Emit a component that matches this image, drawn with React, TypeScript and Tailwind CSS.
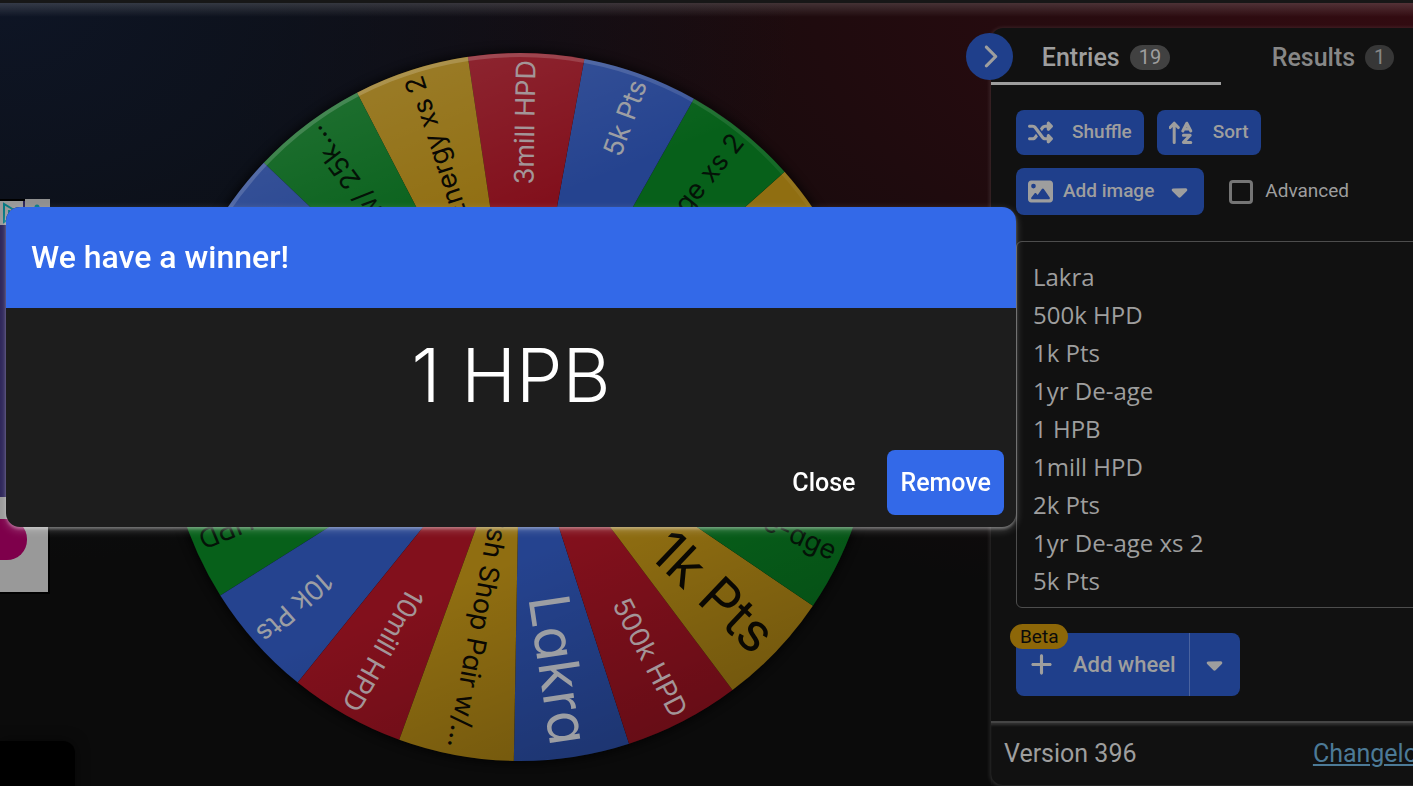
import { FaCaretDown, FaChevronRight, FaImage, FaPlus, FaShuffle } from 'react-icons/fa6'

interface Slice {
  label: string
  size?: number
}

const slices: Slice[] = [
  { label: 'Lakra', size: 56 },
  { label: '500k HPD' },
  { label: '1k Pts', size: 54 },
  { label: '1yr De-age' },
  { label: '1 HPB', size: 54 },
  { label: '1mill HPD' },
  { label: '2k Pts' },
  { label: '1yr De-age xs 2' },
  { label: '5k Pts' },
  { label: '3mill HPD' },
  { label: 'Energy xs 2' },
  { label: 'Pair w/ 25k…' },
  { label: '' },
  { label: '' },
  { label: '' },
  { label: '5mill HPD' },
  { label: '10k Pts' },
  { label: '10mill HPD' },
  { label: 'Cash Shop Pair w/…' },
]

const palette = [
  { fill: '#25438f', text: '#9c9ea3' },
  { fill: '#82101c', text: '#a39598' },
  { fill: '#906e11', text: '#0a0803' },
  { fill: '#07601a', text: '#041207' },
]

const entries = [
  'Lakra',
  '500k HPD',
  '1k Pts',
  '1yr De-age',
  '1 HPB',
  '1mill HPD',
  '2k Pts',
  '1yr De-age xs 2',
  '5k Pts',
]

const STEP = 360 / slices.length
const START = 91
const RADIUS = 354

function point(angle: number) {
  const rad = (angle * Math.PI) / 180
  return `${RADIUS * Math.cos(rad)} ${RADIUS * Math.sin(rad)}`
}

function Wheel() {
  return (
    <svg viewBox="-370 -370 740 740" className="w-[740px] shrink-0" role="img" aria-label="Wheel">
      <defs>
        <linearGradient id="sheen" x1="0.25" y1="0" x2="0.65" y2="1">
          <stop offset="0" stopColor="#fff" stopOpacity="0.11" />
          <stop offset="0.28" stopColor="#fff" stopOpacity="0" />
          <stop offset="0.7" stopColor="#000" stopOpacity="0" />
          <stop offset="1" stopColor="#000" stopOpacity="0.22" />
        </linearGradient>
        <linearGradient id="rim" x1="0.25" y1="0" x2="0.45" y2="0.5">
          <stop offset="0" stopColor="#fff" stopOpacity="0.2" />
          <stop offset="1" stopColor="#fff" stopOpacity="0" />
        </linearGradient>
        <filter id="soft" x="-10%" y="-10%" width="120%" height="120%">
          <feGaussianBlur stdDeviation="5" />
        </filter>
      </defs>
      <circle r="357" fill="#000" opacity="0.6" filter="url(#soft)" />
      {slices.map((slice, i) => {
        const from = START - i * STEP
        return (
          <path
            key={i}
            d={`M0 0 L${point(from)} A${RADIUS} ${RADIUS} 0 0 0 ${point(from - STEP)} Z`}
            fill={palette[i % 4].fill}
          />
        )
      })}
      <circle r={RADIUS} fill="url(#sheen)" />
      <circle r={RADIUS - 2} fill="none" stroke="url(#rim)" strokeWidth="4" />
      {slices.map((slice, i) => (
        <text
          key={i}
          transform={`rotate(${START - (i + 0.5) * STEP})`}
          x={slice.size ? 341 : 347}
          y="0"
          textAnchor="end"
          dominantBaseline="central"
          fontSize={slice.size ?? 27}
          fill={palette[i % 4].text}
          className="font-['Inter',sans-serif] font-normal [font-feature-settings:'cv11']"
        >
          {slice.label}
        </text>
      ))}
    </svg>
  )
}

function SortIcon() {
  return (
    <svg
      viewBox="0 0 25 25"
      className="size-[25px]"
      fill="none"
      stroke="currentColor"
      strokeWidth="3"
      strokeLinecap="round"
      strokeLinejoin="round"
    >
      <path d="M5.2 3.2v19.4M1.1 7.6l4.1-4.4 4.1 4.4" />
      <path d="M13.8 11l4-7.8 4 7.8M15.2 9h5.2" strokeWidth="3" />
      <path d="M14.4 15.3h6.8l-6.8 7.1h7.4" strokeWidth="3" />
    </svg>
  )
}

function SideAd() {
  return (
    <aside className="relative w-12 shrink-0 pt-[196px]">
      <div className="w-[50px] border-t-2 border-r-2 border-b-2 border-black bg-[#2b2358]">
        <div className="flex h-6 justify-between">
          <span className="w-[23px] bg-[#999999]">
            <svg viewBox="0 0 23 24" className="h-6 w-[23px]" fill="none" stroke="#067983" strokeWidth="2">
              <path d="M4 3v18l15-9z" />
              <path d="M9 9v7" />
            </svg>
          </span>
          <span className="-mt-0.5 -mr-0.5 w-[25px] bg-[#8f8f8f]">
            <svg viewBox="0 0 24 24" className="size-6" fill="#067983">
              <circle cx="12" cy="8" r="2.5" />
              <circle cx="12" cy="14" r="2.5" />
              <circle cx="12" cy="20" r="2.5" />
            </svg>
          </span>
        </div>
        <div className="h-[272px]" />
        <div className="h-[95px] bg-[#999999] pt-[22px]">
          <div className="h-[41px] w-[27px] rounded-r-[20px] bg-[#7e004b]" />
        </div>
      </div>
      <div className="absolute top-[738px] left-0 h-[60px] w-[75px] rounded-tr-[12px] bg-black shadow-[0_0_14px_rgba(0,0,0,0.5)]" />
    </aside>
  )
}

function EntriesPanel() {
  return (
    <section className="relative mt-[25px] -mr-[38px] flex h-[757px] w-[460px] shrink-0 flex-col rounded-[12px] bg-[#111111] font-['Roboto',sans-serif] text-[#9e9e9e] shadow-[0_1px_4px_1px_rgba(255,255,255,0.14)]">
      <button
        aria-label="Hide panel"
        className="absolute top-[5px] -left-[25px] flex size-[47px] items-center justify-center rounded-full bg-[#1f3f8b]"
      >
        <FaChevronRight className="size-[25px]" />
      </button>
      <div role="tablist" className="grid h-[57px] shrink-0 grid-cols-2 text-[25px] font-medium">
        <button
          role="tab"
          aria-selected="true"
          className="flex items-center justify-center gap-[10px] border-b-3 border-[#9e9e9e] pt-[5px]"
        >
          Entries
          <span className="rounded-full bg-[#414141] px-[9px] text-[20px] leading-[25px] font-normal">19</span>
        </button>
        <button
          role="tab"
          aria-selected="false"
          className="flex items-center justify-center gap-[10px] border-b-3 border-transparent pt-[5px] pr-[6px] text-[#878787]"
        >
          Results
          <span className="rounded-full bg-[#373737] px-[9px] text-[20px] leading-[25px] font-normal">1</span>
        </button>
      </div>

      <div className="flex flex-1 flex-col items-start px-[25px] pt-[25px] text-[19px] font-medium">
        <div className="flex gap-[13px]">
          <button className="flex h-[45px] items-center gap-[19px] rounded-lg bg-[#1f3f8b] px-3">
            <FaShuffle className="size-[25px]" />
            Shuffle
          </button>
          <button className="flex h-[45px] items-center gap-[19px] rounded-lg bg-[#1f3f8b] px-3">
            <SortIcon />
            Sort
          </button>
        </div>
        <div className="mt-[13px] flex items-center gap-[25px]">
          <button className="flex h-[47px] items-center rounded-lg bg-[#1f3f8b] px-3">
            <FaImage className="mr-[10px] size-[25px]" />
            Add image
            <FaCaretDown className="ml-[13px] size-[25px]" />
          </button>
          <label className="flex items-center gap-3 font-normal">
            <input
              type="checkbox"
              className="size-6 appearance-none rounded-[4px] border-3 border-[#757575]"
            />
            Advanced
          </label>
        </div>
        <textarea
          aria-label="Entries"
          defaultValue={entries.join('\n')}
          className="mt-[26px] h-[367px] w-full resize-none overflow-hidden rounded-[6px] border border-[#4d4d4d] bg-transparent p-4 font-['Open_Sans',sans-serif] text-[24px] leading-[38px] font-normal outline-none"
        />
        <div className="relative mt-[25px] flex h-[63px] text-[22px]">
          <button className="flex items-center gap-[19px] rounded-l-lg border-r border-[#4a639f] bg-[#1f3f8b] px-[13px]">
            <FaPlus className="size-[25px]" />
            Add wheel
          </button>
          <button
            aria-label="More wheel options"
            className="flex w-[50px] items-center justify-center rounded-r-lg bg-[#1f3f8b]"
          >
            <FaCaretDown className="size-[25px]" />
          </button>
          <span className="absolute -top-[9px] -left-[6px] rounded-full bg-[#8d6708] px-[10px] text-[19px] leading-[25px] font-normal text-[#0b0b0b]">
            Beta
          </span>
        </div>
      </div>

      <footer className="flex h-[64px] items-center justify-between border-t-2 border-[#454545] pr-[19px] pl-[13px] text-[25px] shadow-[inset_0_3px_3px_-1px_rgba(255,255,255,0.15)]">
        <span>Version 396</span>
        <a href="#changelog" className="text-[#4c7a97] underline">
          Changelog
        </a>
      </footer>
    </section>
  )
}

function WinnerDialog() {
  return (
    <div className="fixed inset-0 pt-[207px] pl-[6px]">
      <div
        role="dialog"
        aria-labelledby="winner-title"
        className="w-[1010px] max-w-full overflow-hidden rounded-[14px] bg-[#1d1d1d] font-['Roboto',sans-serif] text-white shadow-[0_2px_3px_rgba(255,255,255,0.3),0_3px_8px_rgba(255,255,255,0.25)]"
      >
        <h1 id="winner-title" className="bg-[#3369e8] px-[25px] text-[32px] leading-[101px] font-medium">
          We have a winner!
        </h1>
        <p className="pt-[19px] text-center font-['Inter',sans-serif] text-[74px] leading-[96px] font-light">
          1 HPB
        </p>
        <div className="flex justify-end gap-[19px] px-3 pt-[27px] pb-3 text-[25px] font-medium">
          <button className="h-[65px] rounded-lg px-[13px]">Close</button>
          <button className="h-[65px] rounded-lg bg-[#3369e8] px-[13px]">Remove</button>
        </div>
      </div>
    </div>
  )
}

export default function App() {
  return (
    <div className="h-screen overflow-hidden bg-[#0b0b0b]">
      <div className="h-[3px] bg-[#171717]" />
      <main className="flex min-h-full bg-[linear-gradient(rgba(255,255,255,0.16),transparent_14px),radial-gradient(ellipse_800px_560px_at_0_0,#0e1525,transparent),radial-gradient(ellipse_1200px_620px_at_100%_0,#330b11,transparent)]">
        <SideAd />
        <div className="flex min-w-0 flex-1 items-start justify-center pt-[34px]">
          <Wheel />
        </div>
        <EntriesPanel />
      </main>
      <WinnerDialog />
    </div>
  )
}
